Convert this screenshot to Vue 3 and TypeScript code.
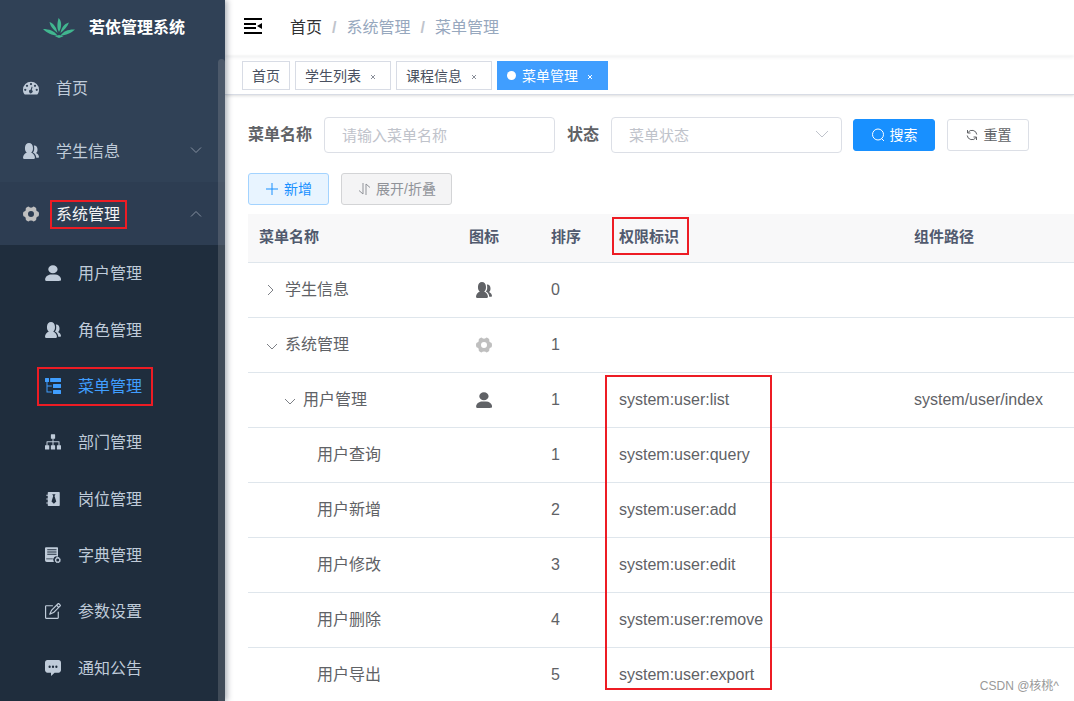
<script setup lang="ts">
import { ref } from 'vue'

interface MenuEntry {
  label: string
  icon: string
  active?: boolean
}

interface MenuRow {
  name: string
  level: number
  toggle?: 'open' | 'closed'
  icon?: string
  order: number
  perm?: string
  component?: string
  marked?: boolean
}

const icons: Record<string, string> = {
  dashboard:
    'M64 14A64 64 0 0 1 128 78C128 91 125 103 118 112Q116 115 113 115H15Q12 115 10 112C3 103 0 91 0 78A64 64 0 0 1 64 14zM9 78a9 9 0 1 0 18 0a9 9 0 1 0-18 0zM23 46a9 9 0 1 0 18 0a9 9 0 1 0-18 0zM55 32a9 9 0 1 0 18 0a9 9 0 1 0-18 0zM87 46a9 9 0 1 0 18 0a9 9 0 1 0-18 0zM101 78a9 9 0 1 0 18 0a9 9 0 1 0-18 0zM69 53Q75 52 76 57L70 80A14 14 0 1 1 61 78z',
  peoples:
    'M95.6 118.8c0 5-3.5 9.1-8 9.1H8c-4.400 0-8-4.100-8-9.100C0 100.500 15.400 83.500 31.200 76.800c-9.100-6.500-15.300-17.900-15.300-31v-9.200C15.900 16.500 30.200.1 47.800.1s31.900 16.400 31.900 36.500v9.200c0 13.100-6.100 24.500-15.200 31 15.700 6.700 31.100 23.700 31.100 42zM106 118.300h15.900c3.400 0 6.100-3.200 6.100-7 0-14-11.800-27-23.800-32.100 7-5 11.600-13.700 11.600-23.700v-7c0-15.400-10.900-28-24.400-28-1.700 0-3.300.2-4.900.6 2 4.700 3 10 3 15.500v9.200c0 13-3 23-11 31 14.800 4.400 27.300 23.400 27.500 41.500z',
  user: 'M63.4 65c20.700 0 37.400-14.300 37.400-32S84.100 1.100 63.400 1.100 26.100 15.400 26.100 33s16.700 32 37.300 32zM80.600 75.600H49.400c-26.600 0-48.200 18.500-48.200 41.300v2.700c0 9.300 21.600 9.300 48.200 9.300h31.200c26.600 0 48.200-.3 48.200-9.300v-2.700c0-22.800-21.600-41.300-48.200-41.300z',
  treeTable:
    'M3 0H29Q32 0 32 3V29Q32 32 29 32H20V60H54V68H20V108H54V116H12V32H3Q0 32 0 29V3Q0 0 3 0zM45 0H124Q128 0 128 4V28Q128 32 124 32H45Q41 32 41 28V4Q41 0 45 0zM68 48H124Q128 48 128 52V76Q128 80 124 80H68Q64 80 64 76V52Q64 48 68 48zM68 96H124Q128 96 128 100V124Q128 128 124 128H68Q64 128 64 124V100Q64 96 68 96z',
  tree: 'M50 2H78Q81 2 81 5V34Q81 37 78 37H68V58H112Q116 58 116 62V89H125Q128 89 128 92V121Q128 124 125 124H98Q95 124 95 121V92Q95 89 98 89H108V66H68V89H78Q81 89 81 92V121Q81 124 78 124H50Q47 124 47 121V92Q47 89 50 89H60V66H20V89H31Q34 89 34 92V121Q34 124 31 124H3Q0 124 0 121V92Q0 89 3 89H12V62Q12 58 16 58H60V37H50Q47 37 47 34V5Q47 2 50 2z',
  post: 'M28 8H112Q118 8 118 14V114Q118 120 112 120H28Q22 120 22 114V100H10V92H22V68H10V60H22V38H10V30H22V14Q22 8 28 8zM58 26H84L76 40L90 84L71 102L52 84L66 40z',
  dict: 'M8 2H98Q104 2 104 8V78A26 26 0 0 0 68 112Q70 116 72 120H14Q0 120 0 106V10Q0 2 8 2zM18 18V25H92V18zM18 36V43H92V36zM18 54V61H92V54zM10 91V98H62V91zM94 78L102 82L112 80L117 89L126 95L123 104L126 113L117 119L112 127L102 125L92 128L87 119L78 114L81 104L78 95L87 89zM90 104a12 12 0 1 0 24 0a12 12 0 1 0-24 0z',
  edit: 'M106.100 67.200a4.800 4.800 0 0 0-4.800 4.800V118.400H9.600V26.700h50.100a4.800 4.800 0 0 0 0-9.600H9.600a9.600 9.600 0 0 0-9.600 9.600V118.400c0 5.300 4.300 9.600 9.600 9.600h91.700c5.300 0 9.600-4.300 9.600-9.600V72a4.800 4.800 0 0 0-4.800-4.800zM125.200 13.400L114.600 2.800c-3.700-3.700-9.900-3.700-13.600 0L48 55.800a4 4 0 0 0-.9 1.400L33.800 88.500c-.7 1.800-.2 3.600.9 4.700 1.100 1.100 2.900 1.700 4.700.9l31.400-13.300c.5-.2 1-.5 1.400-.9l53-53c3.700-3.700 3.700-9.800 0-13.500zM66.100 72.400l-18.300 7.800 7.700-18.400L92.700 24.700l10.600 10.500zM118.300 20.200l-8.200 8.200-10.600-10.500 8.300-8.300z',
  message:
    'M0 21v59.600c0 11.600 8.500 20.900 19.100 20.900h28.600l1 26.500 28.100-26.500h32.100c10.600 0 19.100-9.300 19.100-20.900V21C128 9.400 119.500 0 108.900 0H19.100C8.500 0 0 9.400 0 21zM82 54a9 10 0 1 0 18 0a9 10 0 1 0-18 0zM55 54a9 10 0 1 0 18 0a9 10 0 1 0-18 0zM28 54a9 10 0 1 0 18 0a9 10 0 1 0-18 0z',
  system:
    'M42 4Q48 4 52 10Q64 16 76 10Q80 4 86 4Q104 10 107 22Q102 42 122 45Q128 48 128 64Q128 80 122 83Q102 86 107 106Q104 118 86 124Q80 124 76 118Q64 112 52 118Q48 124 42 124Q24 118 21 106Q26 86 6 83Q0 80 0 64Q0 48 6 45Q26 42 21 22Q24 10 42 4zM40 64a24 24 0 1 0 48 0a24 24 0 1 0-48 0z',
}

const subMenu: MenuEntry[] = [
  { label: '用户管理', icon: 'user' },
  { label: '角色管理', icon: 'peoples' },
  { label: '菜单管理', icon: 'treeTable', active: true },
  { label: '部门管理', icon: 'tree' },
  { label: '岗位管理', icon: 'post' },
  { label: '字典管理', icon: 'dict' },
  { label: '参数设置', icon: 'edit' },
  { label: '通知公告', icon: 'message' },
]

const tags = [
  { label: '首页', closable: false, active: false },
  { label: '学生列表', closable: true, active: false },
  { label: '课程信息', closable: true, active: false },
  { label: '菜单管理', closable: true, active: true },
]

const rows: MenuRow[] = [
  { name: '学生信息', level: 1, toggle: 'closed', icon: 'peoples', order: 0 },
  { name: '系统管理', level: 1, toggle: 'open', icon: 'system', order: 1 },
  { name: '用户管理', level: 2, toggle: 'open', icon: 'user', order: 1, perm: 'system:user:list', component: 'system/user/index', marked: true },
  { name: '用户查询', level: 3, order: 1, perm: 'system:user:query' },
  { name: '用户新增', level: 3, order: 2, perm: 'system:user:add' },
  { name: '用户修改', level: 3, order: 3, perm: 'system:user:edit' },
  { name: '用户删除', level: 3, order: 4, perm: 'system:user:remove' },
  { name: '用户导出', level: 3, order: 5, perm: 'system:user:export' },
]

const menuName = ref('')
const status = ref('')
</script>

<template>
  <div class="app">
    <aside class="sidebar">
      <a class="brand" href="#">
        <svg class="logo" viewBox="0 0 32 20" aria-hidden="true">
          <path d="M16 14C13 9 15 3 15.500 0C19 3 19 9 16 14zM14.500 15C11 12 7.500 9 6.500 4C11.500 6 13.500 10 14.500 15zM17.500 15C18.500 10 20.500 6 26 4.500C24.500 9 21 12 17.500 15zM14.500 17.500C9 17.500 4 15 0 11C6 11 11.500 13 14.500 17.500zM17.500 17.500C20.500 13 26 11 32 11.500C28 15 23 17.500 17.500 17.500zM12 18.300L16 17L20.500 18.300L16 20z" />
        </svg>
        <span>若依管理系统</span>
      </a>
      <nav class="menu">
        <a class="item" href="#">
          <svg class="icon" viewBox="0 0 128 128"><path :d="icons.dashboard" /></svg>
          <span>首页</span>
        </a>
        <a class="item" href="#">
          <svg class="icon" viewBox="0 0 128 128"><path :d="icons.peoples" /></svg>
          <span>学生信息</span>
          <svg class="chevron" viewBox="0 0 12 12"><path d="M1 2.500L6 7.500L11 2.500" /></svg>
        </a>
        <a class="item opened" href="#">
          <svg class="icon gear" viewBox="0 0 128 128"><path :d="icons.system" /></svg>
          <span class="marked">系统管理</span>
          <svg class="chevron" viewBox="0 0 12 12"><path d="M1 8.500L6 3.500L11 8.500" /></svg>
        </a>
        <div class="submenu">
          <a v-for="m in subMenu" :key="m.label" class="sub" :class="{ active: m.active }" href="#">
            <svg class="icon" viewBox="0 0 128 128"><path :d="icons[m.icon]" /></svg>
            <span>{{ m.label }}</span>
          </a>
        </div>
      </nav>
      <div class="scroll-thumb"></div>
    </aside>

    <main class="main">
      <header class="navbar">
        <button class="fold" type="button" aria-label="折叠菜单">
          <svg viewBox="0 0 18 16"><path d="M0 0H18V2H0zM0 5H12V7H0zM0 9H12V11H0zM0 14H18V16H0zM18 5V11L13 8z" /></svg>
        </button>
        <nav class="crumbs">
          <a class="home" href="#">首页</a><i>/</i><span>系统管理</span><i>/</i><span>菜单管理</span>
        </nav>
      </header>

      <div class="tags">
        <a v-for="t in tags" :key="t.label" class="tag" :class="{ active: t.active }" href="#">
          <span>{{ t.label }}</span>
          <svg v-if="t.closable" class="close" viewBox="0 0 6 6"><path d="M1 1L5 5M5 1L1 5" /></svg>
        </a>
      </div>

      <section class="content">
        <form class="search" @submit.prevent>
          <label for="menu-name">菜单名称</label>
          <input id="menu-name" v-model="menuName" class="field" type="text" placeholder="请输入菜单名称" />
          <label for="menu-status">状态</label>
          <div class="select">
            <select id="menu-status" v-model="status" class="field">
              <option value="">菜单状态</option>
              <option value="0">正常</option>
              <option value="1">停用</option>
            </select>
            <svg class="caret" viewBox="0 0 12 12"><path d="M0 3L6 9L12 3" /></svg>
          </div>
          <button class="btn primary" type="submit">
            <svg viewBox="0 0 14 14"><circle cx="7" cy="6.500" r="5.500" /><path d="M10.500 10.500L13 13" /></svg>搜索
          </button>
          <button class="btn" type="reset">
            <svg viewBox="0 0 14 14"><path d="M2.500 2V5H5.500M3 4.500A4.800 4.800 0 0 1 11.800 6.500M11.500 12V9H8.500M11 9.500A4.800 4.800 0 0 1 2.200 7.500" /></svg>重置
          </button>
        </form>

        <div class="toolbar">
          <button class="btn add" type="button">
            <svg viewBox="0 0 14 14"><path d="M7 1V13M1 7H13" /></svg>新增
          </button>
          <button class="btn expand" type="button">
            <svg viewBox="0 0 14 14"><path d="M6 1V12L2 8.500M9 13V2L13 5.500" /></svg>展开/折叠
          </button>
        </div>

        <table class="table">
          <colgroup>
            <col class="c-name" /><col class="c-icon" /><col class="c-order" /><col class="c-perm" /><col />
          </colgroup>
          <thead>
            <tr>
              <th>菜单名称</th>
              <th class="center">图标</th>
              <th>排序</th>
              <th class="perm-head">权限标识</th>
              <th>组件路径</th>
            </tr>
          </thead>
          <tbody>
            <tr v-for="r in rows" :key="r.name + r.level">
              <td>
                <div class="name" :class="'level-' + r.level">
                  <button v-if="r.toggle" class="toggle" type="button" :aria-label="r.name">
                    <svg v-if="r.toggle === 'closed'" viewBox="0 0 12 12"><path d="M2 1L7 6L2 11" /></svg>
                    <svg v-else viewBox="0 0 12 12"><path d="M1 5L6 10L11 5" /></svg>
                  </button>
                  <span>{{ r.name }}</span>
                </div>
              </td>
              <td class="center">
                <svg v-if="r.icon" class="icon" :class="{ gear: r.icon === 'system' }" viewBox="0 0 128 128"><path :d="icons[r.icon]" /></svg>
              </td>
              <td>{{ r.order }}</td>
              <td :class="{ 'perm-first': r.marked }">{{ r.perm }}</td>
              <td>{{ r.component }}</td>
            </tr>
          </tbody>
        </table>
      </section>
      <div class="watermark">CSDN @核桃^</div>
    </main>
  </div>
</template>

<style>
body {
  margin: 0;
}
</style>

<style scoped>
.app,
.app *,
.app *::before,
.app *::after {
  box-sizing: border-box;
}
.app {
  display: flex;
  height: 100vh;
  overflow: hidden;
  background: #fff;
  color: #606266;
  font-family: "Liberation Sans", "Noto Sans CJK SC", sans-serif;
  font-size: 16px;
  line-height: 24px;
}
a {
  color: inherit;
  text-decoration: none;
}
button,
input,
select {
  font-family: inherit;
}
svg {
  display: block;
  flex: none;
}
.icon {
  width: 16px;
  height: 16px;
  fill: currentColor;
  fill-rule: evenodd;
}
.icon.gear {
  fill: #bfbfbf;
}

.sidebar {
  position: relative;
  z-index: 1;
  display: flex;
  flex: 0 0 225px;
  flex-direction: column;
  background: #304156;
  color: #bfcbd9;
  box-shadow: 2px 0 6px rgba(0, 21, 41, 0.35);
}
.brand {
  display: flex;
  flex: none;
  align-items: center;
  gap: 14px;
  height: 56px;
  padding-left: 43px;
  color: #fff;
  font-weight: 700;
}
.logo {
  width: 32px;
  height: 20px;
  fill: #41b68f;
}
.menu {
  display: flex;
  flex: 1;
  flex-direction: column;
}
.item {
  display: flex;
  flex: none;
  align-items: center;
  gap: 17px;
  height: 63px;
  padding: 0 23px;
}
.item span,
.sub span {
  padding-top: 2px;
}
.item.opened {
  background: #2d3d52;
  color: #f4f4f5;
}
.chevron {
  width: 12px;
  height: 12px;
  margin-left: auto;
  fill: none;
  stroke: #8590a0;
}
.submenu {
  display: grid;
  flex: 1;
  grid-auto-rows: 1fr;
  padding-bottom: 5px;
  background: #1f2d3d;
}
.sub {
  position: relative;
  display: flex;
  align-items: center;
  gap: 17px;
  padding-left: 45px;
}
.sub.active {
  color: #409eff;
}
.marked {
  position: relative;
}
.marked::after,
.sub.active::after,
.perm-head::after,
.perm-first::after {
  position: absolute;
  border: 2px solid #ed1c24;
  content: "";
  pointer-events: none;
}
.marked::after {
  inset: -1px -7px -2px -6px;
}
.sub.active::after {
  top: 9px;
  left: 37px;
  width: 116px;
  height: 39px;
}
.scroll-thumb {
  position: absolute;
  top: 59px;
  right: 0;
  bottom: 0;
  width: 7px;
  border-radius: 4px 4px 0 0;
  background: rgba(144, 147, 153, 0.3);
}

.main {
  position: relative;
  display: flex;
  flex: 1;
  flex-direction: column;
  min-width: 0;
}
.navbar {
  display: flex;
  flex: none;
  align-items: center;
  gap: 28px;
  height: 56px;
  padding: 0 19px 4px;
  box-shadow: 0 1px 4px rgba(0, 21, 41, 0.08);
}
.fold {
  padding: 0;
  border: 0;
  background: none;
}
.fold svg {
  width: 18px;
  height: 16px;
}
.crumbs {
  display: flex;
  padding-top: 4px;
  color: #97a8be;
}
.crumbs .home {
  color: #303133;
}
.crumbs i {
  margin: 0 10px;
  color: #c0c4cc;
  font-style: normal;
  font-weight: 700;
}
.tags {
  display: flex;
  flex: none;
  gap: 5px;
  height: 39px;
  padding: 5px 17px 0;
  border-bottom: 1px solid #d8dce5;
  box-shadow: 0 1px 3px rgba(0, 0, 0, 0.12), 0 0 3px rgba(0, 0, 0, 0.04);
}
.tag {
  display: flex;
  align-items: center;
  height: 29px;
  padding: 0 9px;
  border: 1px solid #d8dce5;
  color: #495060;
  font-size: 14px;
}
.tag.active {
  border-color: #409eff;
  background: #409eff;
  color: #fff;
}
.tag.active::before {
  width: 9px;
  height: 9px;
  margin-right: 6px;
  border-radius: 50%;
  background: #fff;
  content: "";
}
.close {
  width: 6px;
  height: 6px;
  margin: 2px 5px 0 9px;
  fill: none;
  stroke: #8a8f99;
}
.tag.active .close {
  stroke: #fff;
}

.content {
  padding: 22px 0 0 23px;
}
.search {
  display: flex;
  align-items: center;
}
.search label {
  margin-right: 12px;
  font-weight: 700;
}
.field {
  display: block;
  width: 231px;
  height: 36px;
  margin-right: 12px;
  padding: 0 17px;
  border: 1px solid #dcdfe6;
  border-radius: 4px;
  outline: 0;
  background: #fff;
  color: #606266;
  font-size: 15px;
}
.field::placeholder {
  color: #bfc3cb;
  opacity: 1;
}
select.field {
  margin: 0;
  appearance: none;
  color: #bfc3cb;
}
.select {
  position: relative;
  margin-right: 11px;
}
.caret {
  position: absolute;
  top: 11px;
  right: 14px;
  width: 12px;
  height: 12px;
  fill: none;
  stroke: #c0c4cc;
  pointer-events: none;
}
.btn {
  display: flex;
  align-items: center;
  justify-content: center;
  gap: 5px;
  height: 32px;
  min-width: 81px;
  margin-right: 12px;
  padding: 0 15px;
  border: 1px solid #dcdfe6;
  border-radius: 3px;
  background: #fff;
  color: #606266;
  font-size: 14px;
  line-height: 20px;
}
.btn svg {
  width: 14px;
  height: 14px;
  fill: none;
  stroke: currentColor;
}
.search .btn {
  min-width: 82px;
}
.btn.primary {
  border-color: #1890ff;
  background: #1890ff;
  color: #fff;
}
.toolbar {
  display: flex;
  margin: 20px 0 9px;
}
.btn.add {
  border-color: #a3d3ff;
  background: #e8f4ff;
  color: #1890ff;
}
.btn.expand {
  border-color: #d3d4d6;
  background: #f4f4f5;
  color: #909399;
}

.table {
  width: 100%;
  border-collapse: separate;
  border-spacing: 0;
  table-layout: fixed;
}
.c-name {
  width: 180px;
}
.c-icon {
  width: 112px;
}
.c-order {
  width: 68px;
}
.c-perm {
  width: 295px;
}
th,
td {
  height: 55px;
  padding: 0 0 0 11px;
  border-bottom: 1px solid #dfe6ec;
  text-align: left;
  white-space: nowrap;
}
th {
  position: relative;
  height: 49px;
  padding-bottom: 2px;
  background: #f8f8f9;
  color: #515a6e;
  font-size: 15px;
}
th.center,
td.center {
  padding-left: 0;
  text-align: center;
}
td .icon {
  margin: 0 auto;
}
.perm-first {
  position: relative;
}
.perm-head::after {
  top: 3px;
  left: 4px;
  width: 77px;
  height: 38px;
}
.perm-first::after {
  top: 2px;
  left: -3px;
  width: 167px;
  height: 315px;
}
.name {
  display: flex;
  align-items: center;
}
.level-2 {
  padding-left: 18px;
}
.level-3 {
  padding-left: 58px;
}
.toggle {
  width: 26px;
  padding: 0 0 0 7px;
  border: 0;
  background: none;
}
.toggle svg {
  width: 12px;
  height: 12px;
  fill: none;
  stroke: #7d8086;
}
.watermark {
  position: absolute;
  right: 15px;
  bottom: 6px;
  color: #999;
  font-size: 12px;
  line-height: 18px;
}
</style>
